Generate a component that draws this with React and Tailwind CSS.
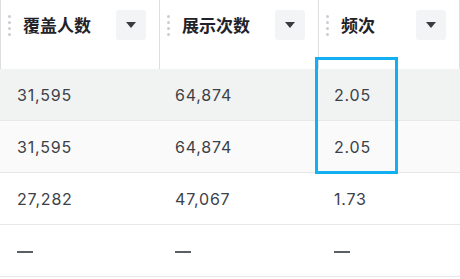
import React from 'react'

const cols = ['覆盖人数', '展示次数', '频次']
const rows = [
  { bg: 'bg-[#f1f3f3]', cells: ['31,595', '64,874', '2.05'] },
  { bg: 'bg-[#fafafa]', cells: ['31,595', '64,874', '2.05'] },
  { bg: 'bg-white', cells: ['27,282', '47,067', '1.73'] },
  { bg: 'bg-white', cells: ['—', '—', '—'] },
]
const widths = ['w-[159px]', 'w-[159px]', 'flex-1']

function Grip() {
  return (
    <div className="flex flex-col gap-[3px] w-[3px] ml-[7px]">
      <span className="w-[3px] h-[3px] rounded-full bg-[#c9ccd1]" />
      <span className="w-[3px] h-[3px] rounded-full bg-[#c9ccd1]" />
      <span className="w-[3px] h-[3px] rounded-full bg-[#c9ccd1]" />
      <span className="w-[3px] h-[3px] rounded-full bg-[#c9ccd1]" />
    </div>
  )
}

export default function App() {
  return (
    <div
      className="relative w-[460px] h-[279px] bg-white overflow-hidden"
      style={{ fontFamily: 'Inter, "Noto Sans CJK SC", sans-serif' }}
    >
      <div className="flex h-[69px] bg-white">
        {cols.map((c, i) => (
          <div
            key={c}
            className={`${widths[i]} flex items-start pt-[10px] pr-[13px] border-l border-[#dcdee0] ${i === 2 ? 'border-r' : ''}`}
          >
            <div className="flex items-center h-[30px]">
              <Grip />
              <span
                className="ml-[12px] text-[17px] font-bold text-[#1f2329]"
                style={{ fontFamily: '"Noto Sans CJK SC", sans-serif' }}
              >
                {c}
              </span>
            </div>
            <div className="ml-auto w-[30px] h-[30px] rounded-[3px] bg-[#f3f4f5] flex items-center justify-center">
              <svg width="10" height="6" viewBox="0 0 10 6">
                <path d="M0 0h10L5 6z" fill="#383c42" />
              </svg>
            </div>
          </div>
        ))}
      </div>
      {rows.map((r, ri) => (
        <div
          key={ri}
          className={`flex h-[52px] items-center border-b border-[#e6e8e9] ${r.bg}`}
        >
          {r.cells.map((v, ci) => (
            <div
              key={ci}
              className={`${widths[ci]} ${ci === 0 ? 'pl-[17px]' : 'pl-[16px]'} text-[16px] tracking-[0.8px] text-[#3c4148]`}
            >
              {v === '—' ? (
                <span className="inline-block w-[16px] h-[2px] bg-[#5a5f66] align-middle" />
              ) : (
                v
              )}
            </div>
          ))}
        </div>
      ))}
      <div className="absolute left-[315px] top-[57px] w-[83px] h-[117px] border-[3px] border-[#12aff2]" />
    </div>
  )
}
